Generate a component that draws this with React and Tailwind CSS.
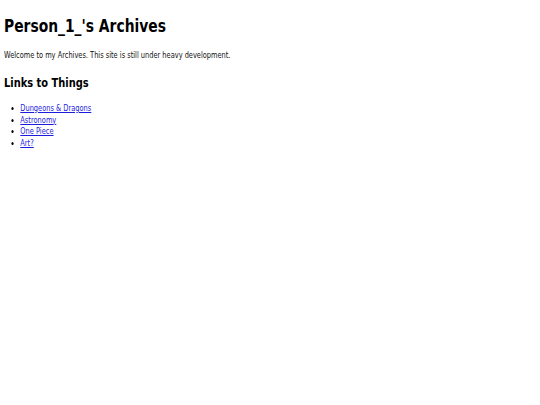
import React from 'react';

const links = ['Dungeons & Dragons', 'Astronomy', 'One Piece', 'Art?'];

// the page is a squeezed capture, so each text block is narrowed to match
const App = () => {
  return (
    <div className="min-h-[405px] bg-white pl-[4px] text-black" style={{ fontFamily: '"DejaVu Sans", Verdana, sans-serif' }}>
      <h1 className="origin-left scale-x-[0.77] pt-[15px] text-[18px] leading-[22px] font-bold">Person_1_'s Archives</h1>
      <p className="mt-[13px] origin-left scale-x-[0.736] text-[9px] leading-[11px] text-[#111]">
        Welcome to my Archives. This site is still under heavy development.
      </p>
      <h2 className="mt-[14px] origin-left scale-x-[0.76] text-[13px] leading-[16px] font-bold">Links to Things</h2>
      <ul className="mt-[12px] origin-left scale-x-[0.74] list-disc pl-[22px] text-[9px] leading-[11.6px]">
        {links.map((item) => (
          <li key={item}>
            <a href="#" className="text-[#1c1cdc] underline">{item}</a>
          </li>
        ))}
      </ul>
    </div>
  );
};

export default App;
